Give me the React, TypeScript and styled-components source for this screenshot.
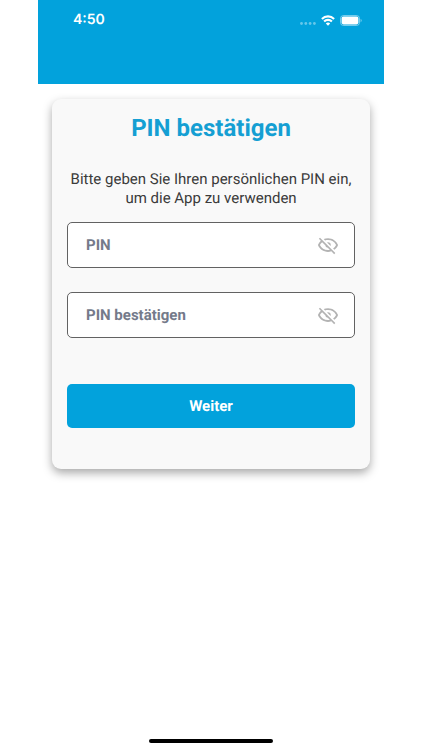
import React, { useState } from "react";
import styled, { createGlobalStyle } from "styled-components";

const blue = "#02a2dc";

const GlobalStyle = createGlobalStyle`
  *, *::before, *::after { box-sizing: border-box; }
  body {
    margin: 0;
    background: #ffffff;
    font-family: Roboto, "Liberation Sans", sans-serif;
    text-rendering: geometricPrecision;
  }
  button, input { font-family: inherit; text-rendering: inherit; }
`;

const Screen = styled.div`
  display: flex;
  flex-direction: column;
  min-height: 100vh;
  margin: 0 38px;
`;

const Header = styled.header`
  height: 84px;
  padding: 10px 22px 0 35px;
  background: ${blue};
`;

const StatusBar = styled.div`
  display: flex;
  align-items: center;
  justify-content: space-between;
  height: 20px;
`;

const Clock = styled.time`
  color: #ffffff;
  font: 600 14px/20px Inter, Roboto, sans-serif;
`;

const StatusIcons = styled.div`
  display: flex;
  align-items: center;
  gap: 5px;
`;

const Main = styled.main`
  flex: 1;
  padding: 15px 14px;
`;

const Card = styled.form`
  display: flex;
  flex-direction: column;
  padding: 13px 15px 41px;
  border-radius: 9px;
  background: #f9f9f9;
  box-shadow: 0 4px 10px rgba(0, 0, 0, 0.34);
`;

const Title = styled.h1`
  margin: 0 0 26px;
  color: #159fd3;
  font-size: 24px;
  line-height: 32px;
  font-weight: 700;
  text-align: center;
`;

const Intro = styled.p`
  margin: 0 -8px 14px;
  color: #3b3b3b;
  font-size: 15px;
  line-height: 19px;
  text-align: center;
`;

const Field = styled.div`
  display: flex;
  align-items: center;
  height: 46px;
  margin-bottom: 24px;
  padding: 0 15px 0 18px;
  border: 1px solid #626262;
  border-radius: 5px;
  background: #ffffff;
`;

const PinInput = styled.input`
  flex: 1;
  min-width: 0;
  height: 100%;
  padding: 0;
  border: 0;
  outline: 0;
  background: transparent;
  color: #3b3b3b;
  font-size: 15px;
  font-weight: 700;

  &::placeholder {
    color: #747a8a;
    opacity: 1;
  }
`;

const EyeButton = styled.button`
  display: flex;
  padding: 0;
  border: 0;
  background: transparent;
  color: #b3b3b3;
  cursor: pointer;
`;

const SubmitButton = styled.button`
  height: 44px;
  margin-top: 22px;
  border: 0;
  border-radius: 5px;
  background: ${blue};
  color: #ffffff;
  font-size: 15px;
  font-weight: 700;
  cursor: pointer;
`;

const Footer = styled.footer`
  display: flex;
  justify-content: center;
  padding-bottom: 7px;
`;

const HomeIndicator = styled.div`
  width: 124px;
  height: 4px;
  border-radius: 2px;
  background: #000000;
`;

const SignalIcon = () => (
  <svg width="17" height="12" viewBox="0 0 17 12" fill="#ffffff" fillOpacity="0.4" aria-hidden="true">
    <circle cx="2.5" cy="9.5" r="1.4" />
    <circle cx="6.8" cy="9.5" r="1.4" />
    <circle cx="11.1" cy="9.5" r="1.4" />
    <circle cx="15.4" cy="9.5" r="1.4" />
  </svg>
);

const WifiIcon = () => (
  <svg width="14" height="11" viewBox="0 0 14 11" fill="none" stroke="#ffffff" strokeWidth="2.1" aria-hidden="true">
    <path d="M0.9 3.9a8.7 8.7 0 0 1 12.2 0" />
    <path d="M3.1 6.5a5.5 5.5 0 0 1 7.8 0" />
    <path d="M7 10.8 4.8 8.5a3.1 3.1 0 0 1 4.4 0Z" fill="#ffffff" stroke="none" />
  </svg>
);

const BatteryIcon = () => (
  <svg width="22" height="11" viewBox="0 0 22 11" aria-hidden="true">
    <rect x="0.5" y="0.5" width="19" height="10" rx="3" fill="none" stroke="#ffffff" strokeOpacity="0.45" />
    <rect x="1.6" y="1.6" width="16.8" height="7.8" rx="1.8" fill="#ffffff" />
    <path d="M20.6 3.8v3.6q1-.6 1-1.8t-1-1.8Z" fill="#ffffff" fillOpacity="0.5" />
  </svg>
);

const EyeOffIcon = () => (
  <svg width="22" height="22" viewBox="0 0 24 24" fill="currentColor" aria-hidden="true">
    <path d="M2 5.27 3.28 4 20 20.72 18.73 22l-3.08-3.08c-1.15.38-2.37.58-3.65.58-5 0-9.27-3.11-11-7.5.69-1.76 1.79-3.31 3.19-4.54L2 5.27M12 9a3 3 0 0 1 3 3c0 .35-.06.69-.17 1L11 9.17c.31-.11.65-.17 1-.17m0-4.5c5 0 9.27 3.11 11 7.5-.82 2.08-2.21 3.88-4 5.19l-1.42-1.43c1.36-.94 2.48-2.22 3.24-3.76A9.82 9.82 0 0 0 12 6.5c-1.09 0-2.16.18-3.16.5L7.3 5.47C8.74 4.85 10.33 4.5 12 4.5M3.18 12A9.82 9.82 0 0 0 12 17.5c.69 0 1.37-.07 2-.21L11.72 15A3.06 3.06 0 0 1 9 12.28L5.6 8.87C4.61 9.72 3.78 10.78 3.18 12Z" />
  </svg>
);

const PinField = ({ label }: { label: string }) => {
  const [visible, setVisible] = useState(false);
  return (
    <Field>
      <PinInput
        type={visible ? "text" : "password"}
        inputMode="numeric"
        autoComplete="off"
        placeholder={label}
        aria-label={label}
      />
      <EyeButton type="button" aria-label={`${label} anzeigen`} aria-pressed={visible} onClick={() => setVisible(!visible)}>
        <EyeOffIcon />
      </EyeButton>
    </Field>
  );
};

export default function App() {
  return (
    <>
      <GlobalStyle />
      <Screen>
        <Header>
          <StatusBar>
            <Clock>4:50</Clock>
            <StatusIcons>
              <SignalIcon />
              <WifiIcon />
              <BatteryIcon />
            </StatusIcons>
          </StatusBar>
        </Header>
        <Main>
          <Card onSubmit={(event) => event.preventDefault()}>
            <Title>PIN bestätigen</Title>
            <Intro>
              Bitte geben Sie Ihren persönlichen PIN ein,
              <br />
              um die App zu verwenden
            </Intro>
            <PinField label="PIN" />
            <PinField label="PIN bestätigen" />
            <SubmitButton type="submit">Weiter</SubmitButton>
          </Card>
        </Main>
        <Footer>
          <HomeIndicator />
        </Footer>
      </Screen>
    </>
  );
}
